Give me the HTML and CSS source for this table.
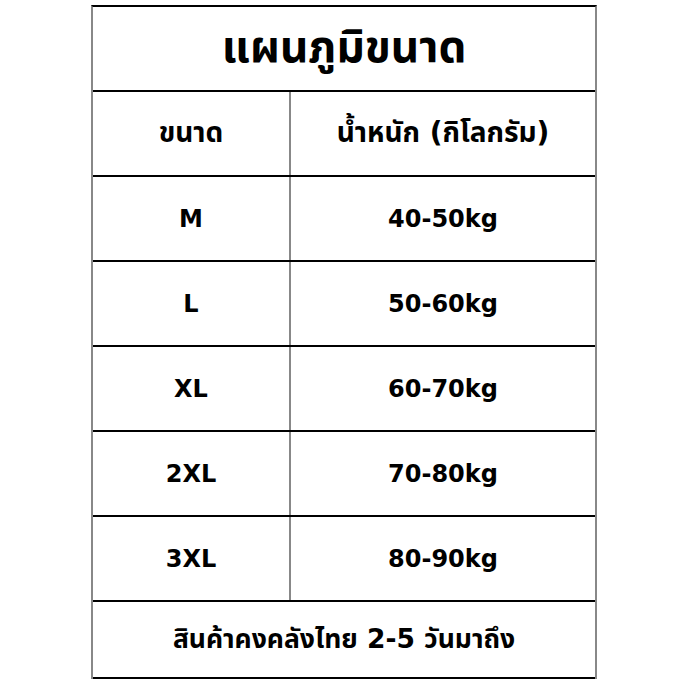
FILE: index.html
```html
<!DOCTYPE html>
<html lang="th">
<head>
<meta charset="utf-8">
<link rel="stylesheet" href="styles.css">
</head>
<body>
<div class="sheet">
  <div class="row title">แผนภูมิขนาด</div>
  <div class="row split head">
    <div class="cell left">ขนาด</div>
    <div class="cell right">น้ำหนัก (กิโลกรัม)</div>
  </div>
  <div class="row split data">
    <div class="cell left">M</div>
    <div class="cell right">40-50kg</div>
  </div>
  <div class="row split data">
    <div class="cell left">L</div>
    <div class="cell right">50-60kg</div>
  </div>
  <div class="row split data">
    <div class="cell left">XL</div>
    <div class="cell right">60-70kg</div>
  </div>
  <div class="row split data">
    <div class="cell left">2XL</div>
    <div class="cell right">70-80kg</div>
  </div>
  <div class="row split data">
    <div class="cell left">3XL</div>
    <div class="cell right">80-90kg</div>
  </div>
  <div class="row footer">สินค้าคงคลังไทย 2-5 วันมาถึง</div>
</div>
</body>
</html>
```
FILE: styles.css
```css
html, body {
  margin: 0;
  padding: 0;
  background: #ffffff;
}
body {
  font-family: "DejaVu Sans", "Noto Sans Thai", "Noto Sans", sans-serif;
  font-weight: 700;
  color: #000000;
}
.sheet {
  margin: 5px 0 0 91px;
  width: 502px;
  border-left: 2px solid #888888;
  border-right: 2px solid #888888;
  border-top: 2px solid #000000;
}
.row {
  height: 83px;
  border-bottom: 2px solid #000000;
  display: flex;
  align-items: center;
  justify-content: center;
}
.title {
  font-size: 44px;
}
.split {
  display: grid;
  grid-template-columns: 196px 304px;
  column-gap: 2px;
  background: #888888;
  align-items: stretch;
}
.cell {
  background: #ffffff;
  display: flex;
  align-items: center;
  justify-content: center;
}
.head .cell {
  font-size: 28px;
}
.data .cell {
  font-size: 24px;
}
.footer {
  height: 75px;
  font-size: 26.5px;
}
```
